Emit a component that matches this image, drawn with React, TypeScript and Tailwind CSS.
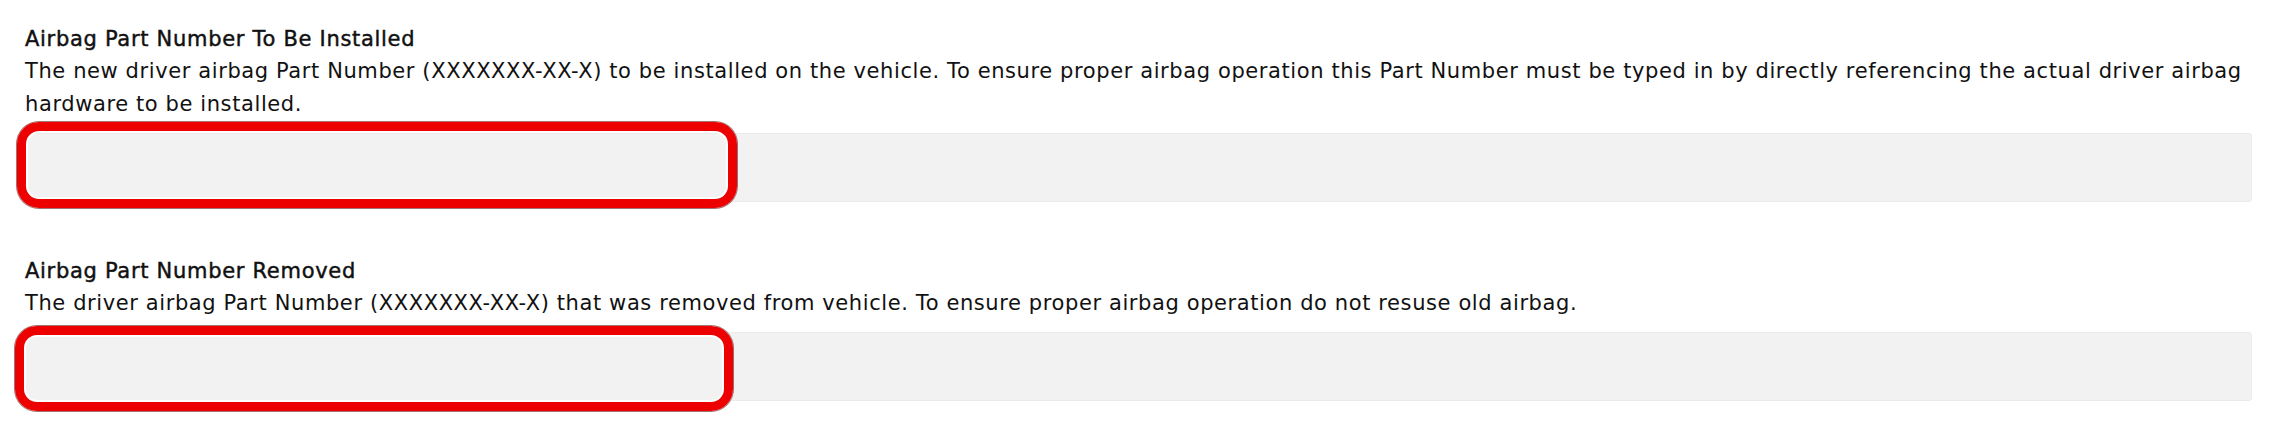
import React from "react";

type FieldProps = {
  title: string;
  description: string;
  markClass: string;
};

function PartNumberField({ title, description, markClass }: FieldProps) {
  return (
    <div>
      <p className="text-[21px] leading-[32px] tracking-[0.7px] text-[#111] [-webkit-text-stroke:0.45px_#111]">
        {title}
      </p>
      <p className="text-[21px] leading-[33px] tracking-[0.6px] text-[#111]">{description}</p>
      <div className="relative mt-[12px]">
        <input
          type="text"
          className="block h-[69px] w-full rounded-[3px] border border-[#ebebeb] bg-[#f2f2f2] outline-none"
        />
        {/* red highlight drawn over the input */}
        <div
          className={`pointer-events-none absolute rounded-[22px] border-[9px] border-[#ec0000] shadow-[0_0_0_1px_rgba(90,0,0,0.55),inset_0_0_0_2px_#ffffff] ${markClass}`}
        />
      </div>
    </div>
  );
}

export default function App() {
  return (
    <div
      className="h-[442px] w-[2286px] bg-white pl-[25px] pr-[34px] pt-[23px]"
      style={{ fontFamily: '"DejaVu Sans", "Liberation Sans", sans-serif' }}
    >
      <PartNumberField
        title="Airbag Part Number To Be Installed"
        description="The new driver airbag Part Number (XXXXXXX-XX-X) to be installed on the vehicle. To ensure proper airbag operation this Part Number must be typed in by directly referencing the actual driver airbag hardware to be installed."
        markClass="-left-[8px] -top-[11px] h-[86px] w-[720px]"
      />
      <div className="mt-[53px]">
        <PartNumberField
          title="Airbag Part Number Removed"
          description="The driver airbag Part Number (XXXXXXX-XX-X) that was removed from vehicle. To ensure proper airbag operation do not resuse old airbag."
          markClass="-left-[10px] -top-[6px] h-[85px] w-[718px]"
        />
      </div>
    </div>
  );
}
